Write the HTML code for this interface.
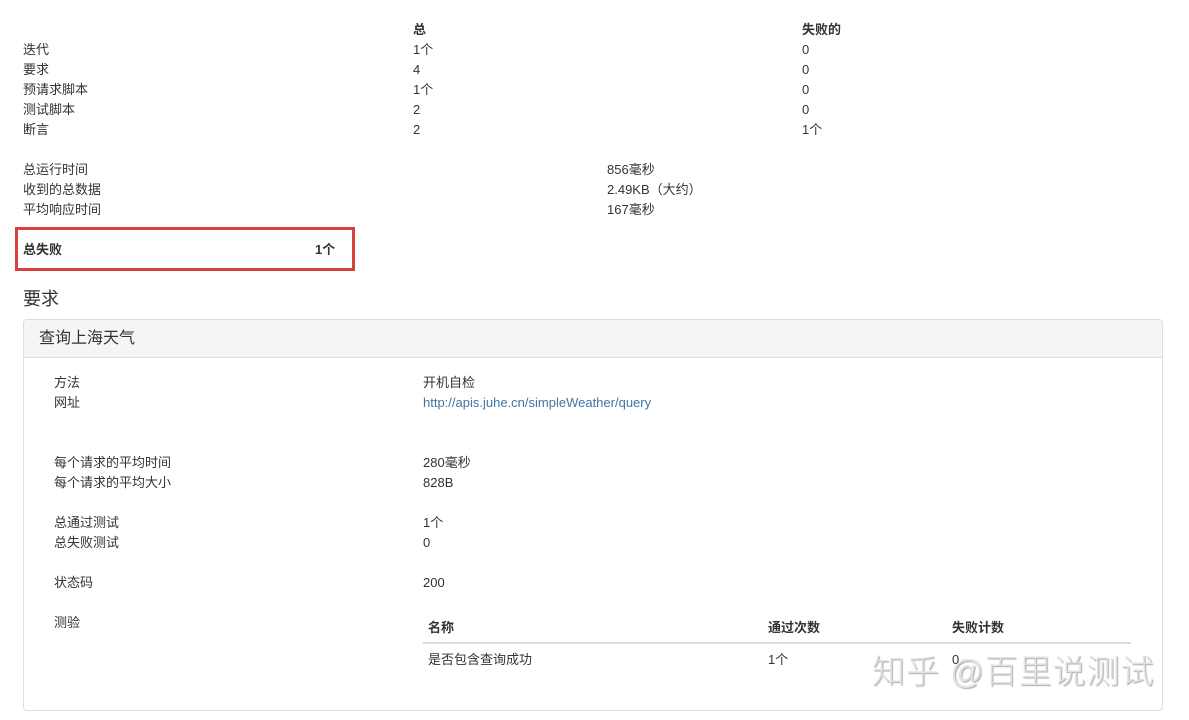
<!DOCTYPE html>
<html><head><meta charset="utf-8"><style>
body{margin:0;width:1189px;height:720px;background:#fff;font-family:"Liberation Sans","Noto Sans CJK SC",sans-serif;font-size:13px;color:#333;position:relative;overflow:hidden}
.t{position:absolute;white-space:nowrap;line-height:20px}
b{font-weight:bold}
a{color:#3f77a6;text-decoration:none}
</style></head><body>
<div class="t" style="left:413px;top:20px"><b>总</b></div>
<div class="t" style="left:802px;top:20px"><b>失败的</b></div>
<div class="t" style="left:23px;top:40px">迭代</div><div class="t" style="left:413px;top:40px">1个</div><div class="t" style="left:802px;top:40px">0</div>
<div class="t" style="left:23px;top:60px">要求</div><div class="t" style="left:413px;top:60px">4</div><div class="t" style="left:802px;top:60px">0</div>
<div class="t" style="left:23px;top:80px">预请求脚本</div><div class="t" style="left:413px;top:80px">1个</div><div class="t" style="left:802px;top:80px">0</div>
<div class="t" style="left:23px;top:100px">测试脚本</div><div class="t" style="left:413px;top:100px">2</div><div class="t" style="left:802px;top:100px">0</div>
<div class="t" style="left:23px;top:120px">断言</div><div class="t" style="left:413px;top:120px">2</div><div class="t" style="left:802px;top:120px">1个</div>
<div class="t" style="left:23px;top:160px">总运行时间</div><div class="t" style="left:607px;top:160px">856毫秒</div>
<div class="t" style="left:23px;top:180px">收到的总数据</div><div class="t" style="left:607px;top:180px">2.49KB（大约）</div>
<div class="t" style="left:23px;top:200px">平均响应时间</div><div class="t" style="left:607px;top:200px">167毫秒</div>
<div style="position:absolute;left:15px;top:227px;width:334px;height:38px;border:3px solid #d9413f"></div>
<div class="t" style="left:23px;top:240px"><b>总失败</b></div><div class="t" style="left:315px;top:240px"><b>1个</b></div>
<div class="t" style="left:23px;top:288px;font-size:18px;line-height:22px">要求</div>
<div style="position:absolute;left:23px;top:319px;width:1138px;height:390px;border:1px solid #ddd;border-radius:4px">
<div style="height:37px;background:#f5f5f5;border-bottom:1px solid #ddd;border-radius:4px 4px 0 0"></div></div>
<div class="t" style="left:39px;top:329px;font-size:16px">查询上海天气</div>
<div class="t" style="left:54px;top:373px">方法</div><div class="t" style="left:423px;top:373px">开机自检</div>
<div class="t" style="left:54px;top:393px">网址</div><div class="t" style="left:423px;top:393px"><a>http://apis.juhe.cn/simpleWeather/query</a></div>
<div class="t" style="left:54px;top:453px">每个请求的平均时间</div><div class="t" style="left:423px;top:453px">280毫秒</div>
<div class="t" style="left:54px;top:473px">每个请求的平均大小</div><div class="t" style="left:423px;top:473px">828B</div>
<div class="t" style="left:54px;top:513px">总通过测试</div><div class="t" style="left:423px;top:513px">1个</div>
<div class="t" style="left:54px;top:533px">总失败测试</div><div class="t" style="left:423px;top:533px">0</div>
<div class="t" style="left:54px;top:573px">状态码</div><div class="t" style="left:423px;top:573px">200</div>
<div class="t" style="left:54px;top:613px">测验</div>
<div class="t" style="left:428px;top:618px"><b>名称</b></div><div class="t" style="left:768px;top:618px"><b>通过次数</b></div><div class="t" style="left:952px;top:618px"><b>失败计数</b></div>
<div style="position:absolute;left:423px;top:642px;width:708px;height:2px;background:#ddd"></div>
<div class="t" style="left:428px;top:650px">是否包含查询成功</div><div class="t" style="left:768px;top:650px">1个</div><div class="t" style="left:952px;top:650px">0</div>
<div class="t" style="left:872px;top:650px;font-size:33px;line-height:44px;color:#e2e2e2;font-weight:300;text-shadow:1px 1px 1px #aaa;letter-spacing:1px">知乎 @百里说测试</div>
</body></html>
